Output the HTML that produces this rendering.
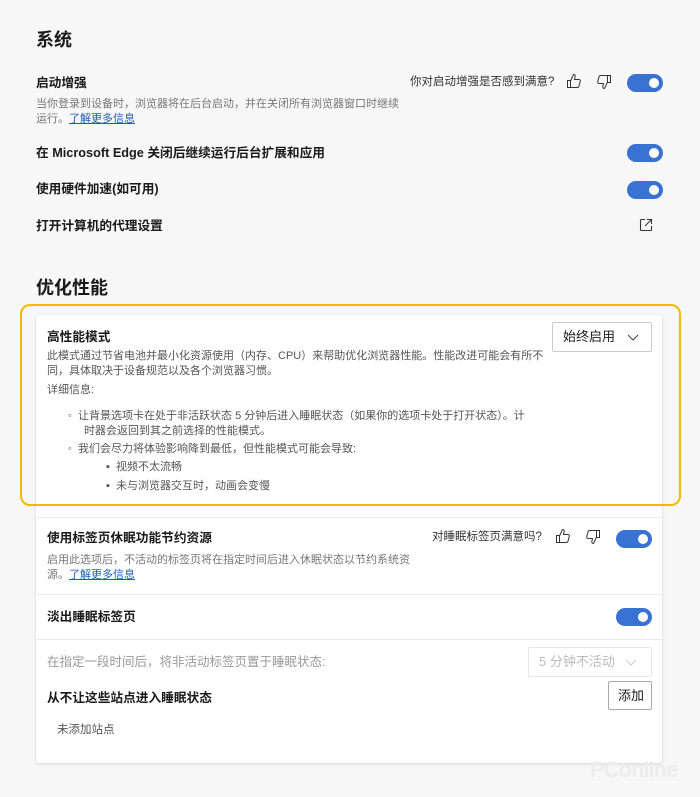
<!DOCTYPE html>
<html><head><meta charset="utf-8"><style>
*{margin:0;padding:0;box-sizing:border-box}
body{width:700px;height:797px;background:#f7f7f7;font-family:"Liberation Sans","Noto Sans CJK SC",sans-serif;color:#1a1a1a;position:relative;overflow:hidden}
.a{position:absolute;white-space:nowrap;line-height:16px}
.h{font-size:18px;font-weight:bold;line-height:24px}
.t{font-size:12.7px;font-weight:bold}
.d{font-size:11px;color:#777}
.g{font-size:11px;color:#555}
a{color:#1a5fb4;text-decoration:underline}
.tg{position:absolute;width:36px;height:18px;border-radius:9px;background:#3a72d4}
.tg:after{content:"";position:absolute;right:4px;top:4px;width:10px;height:10px;border-radius:50%;background:#fff}
.card{position:absolute;left:36px;top:315px;width:626px;height:448px;background:#fff;box-shadow:0 1px 3px rgba(0,0,0,.15);border-radius:3px}
.hr{position:absolute;left:36px;width:626px;height:1px;background:#ebebeb}
.dd{position:absolute;border:1px solid #ccc;background:#fff;font-size:13px;line-height:28px;padding-left:10px;border-radius:2px}
svg{position:absolute}
</style></head><body>
<div class="a h" style="left:36px;top:28px">系统</div>
<div class="a t" style="left:36px;top:75px">启动增强</div>
<div class="a d" style="left:36px;top:96px">当你登录到设备时，浏览器将在后台启动，并在关闭所有浏览器窗口时继续</div>
<div class="a d" style="left:36px;top:111px">运行。<a>了解更多信息</a></div>
<div class="a" style="left:410px;top:74px;font-size:11.5px;color:#333">你对启动增强是否感到满意?</div>
<svg style="left:566px;top:73px" width="16" height="16" viewBox="0 0 16 16" fill="none" stroke="#333" stroke-width="1"><path d="M1.5 7.5h3v7h-3zM4.5 8l3-6.5c1.5 0 2 1 1.5 3l-.5 2h4.5c1 0 1.5.8 1.3 1.6l-1.3 5c-.2.8-.8 1.4-1.6 1.4H4.5"/></svg>
<svg style="left:596px;top:74px" width="16" height="16" viewBox="0 0 16 16" fill="none" stroke="#333" stroke-width="1"><g transform="rotate(180 8 8)"><path d="M1.5 7.5h3v7h-3zM4.5 8l3-6.5c1.5 0 2 1 1.5 3l-.5 2h4.5c1 0 1.5.8 1.3 1.6l-1.3 5c-.2.8-.8 1.4-1.6 1.4H4.5"/></g></svg>
<div class="tg" style="left:627px;top:74px"></div>
<div class="a t" style="left:36px;top:145px">在 Microsoft Edge 关闭后继续运行后台扩展和应用</div>
<div class="tg" style="left:627px;top:144px"></div>
<div class="a t" style="left:36px;top:181px">使用硬件加速(如可用)</div>
<div class="tg" style="left:627px;top:181px"></div>
<div class="a t" style="left:36px;top:218px">打开计算机的代理设置</div>
<svg style="left:639px;top:218px" width="14" height="14" viewBox="0 0 14 14" fill="none" stroke="#333" stroke-width="1.1"><path d="M6 1.5H2.5a1 1 0 0 0-1 1v9a1 1 0 0 0 1 1h9a1 1 0 0 0 1-1V8M8 1.5h4.5V6M12.5 1.5L6 8"/></svg>
<div class="a h" style="left:36px;top:276px">优化性能</div>

<div class="card"></div>
<div style="position:absolute;left:20px;top:304px;width:661px;height:202px;border:2px solid #f5b800;border-radius:10px"></div>
<div class="a t" style="left:47px;top:329px">高性能模式</div>
<div class="dd" style="left:552px;top:322px;width:100px;height:30px">始终启用<svg style="left:74px;top:11px" width="12" height="8" viewBox="0 0 12 8" fill="none" stroke="#444"><path d="M1 1l5 5 5-5"/></svg></div>
<div class="a g" style="left:47px;top:348px">此模式通过节省电池并最小化资源使用（内存、CPU）来帮助优化浏览器性能。性能改进可能会有所不</div>
<div class="a g" style="left:47px;top:363px">同，具体取决于设备规范以及各个浏览器习惯。</div>
<div class="a g" style="left:47px;top:382px">详细信息:</div>
<div class="a g" style="left:68px;top:408px">◦&nbsp; 让背景选项卡在处于非活跃状态 5 分钟后进入睡眠状态（如果你的选项卡处于打开状态）。计</div>
<div class="a g" style="left:84px;top:423px">时器会返回到其之前选择的性能模式。</div>
<div class="a g" style="left:68px;top:441px">◦&nbsp; 我们会尽力将体验影响降到最低，但性能模式可能会导致:</div>
<div class="a g" style="left:106px;top:459px">▪&nbsp; 视频不太流畅</div>
<div class="a g" style="left:106px;top:478px">▪&nbsp; 未与浏览器交互时，动画会变慢</div>

<div class="hr" style="top:517px"></div>
<div class="a t" style="left:47px;top:530px">使用标签页休眠功能节约资源</div>
<div class="a g" style="left:47px;top:552px;color:#777">启用此选项后，不活动的标签页将在指定时间后进入休眠状态以节约系统资</div>
<div class="a g" style="left:47px;top:567px;color:#777">源。<a>了解更多信息</a></div>
<div class="a" style="left:432px;top:529px;font-size:11.5px;color:#333">对睡眠标签页满意吗?</div>
<svg style="left:555px;top:528px" width="16" height="16" viewBox="0 0 16 16" fill="none" stroke="#333" stroke-width="1"><path d="M1.5 7.5h3v7h-3zM4.5 8l3-6.5c1.5 0 2 1 1.5 3l-.5 2h4.5c1 0 1.5.8 1.3 1.6l-1.3 5c-.2.8-.8 1.4-1.6 1.4H4.5"/></svg>
<svg style="left:585px;top:529px" width="16" height="16" viewBox="0 0 16 16" fill="none" stroke="#333" stroke-width="1"><g transform="rotate(180 8 8)"><path d="M1.5 7.5h3v7h-3zM4.5 8l3-6.5c1.5 0 2 1 1.5 3l-.5 2h4.5c1 0 1.5.8 1.3 1.6l-1.3 5c-.2.8-.8 1.4-1.6 1.4H4.5"/></g></svg>
<div class="tg" style="left:616px;top:530px"></div>
<div class="hr" style="top:594px"></div>
<div class="a t" style="left:47px;top:609px">淡出睡眠标签页</div>
<div class="tg" style="left:616px;top:608px"></div>
<div class="hr" style="top:639px"></div>
<div class="a" style="left:47px;top:654px;font-size:12.5px;color:#999">在指定一段时间后，将非活动标签页置于睡眠状态:</div>
<div class="dd" style="left:528px;top:647px;width:124px;height:30px;border-color:#e6e6e6;color:#bbb">5 分钟不活动<svg style="left:96px;top:11px" width="12" height="8" viewBox="0 0 12 8" fill="none" stroke="#ccc"><path d="M1 1l5 5 5-5"/></svg></div>
<div class="a t" style="left:47px;top:690px">从不让这些站点进入睡眠状态</div>
<div class="dd" style="left:608px;top:681px;width:44px;height:29px;border-color:#aaa;padding-left:9px">添加</div>
<div class="a" style="left:57px;top:722px;font-size:11.5px;color:#555">未添加站点</div>
<div class="a" style="left:590px;top:757px;font-size:22px;font-weight:bold;color:#ececec;letter-spacing:-1px;line-height:26px">PConline</div>
</body></html>
